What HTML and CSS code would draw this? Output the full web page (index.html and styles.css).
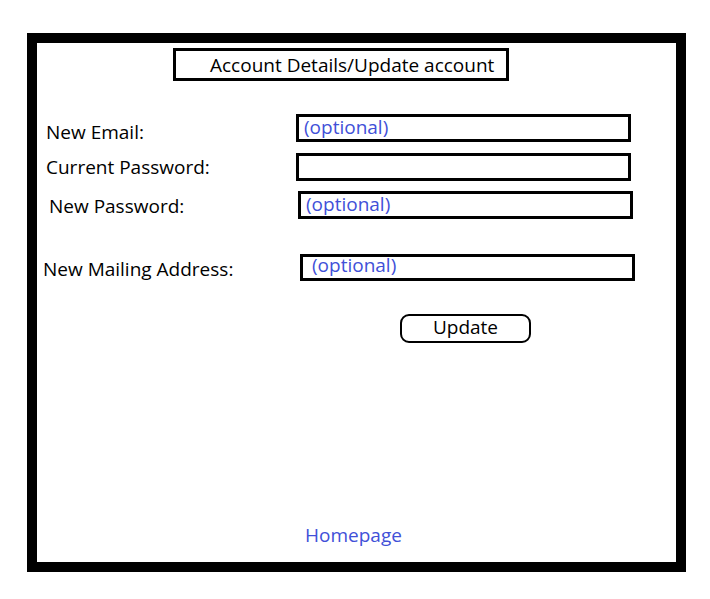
FILE: index.html
```html
<!DOCTYPE html>
<html lang="en">
<head>
	<meta charset="UTF-8">
	<meta name="viewport" content="width=device-width, initial-scale=1.0">
	<title>Account Details</title>
	<link rel="stylesheet" href="styles.css">
</head>
<body>

<div class="frame">

	<!-- Page title -->
	<div class="title-box">Account Details/Update account</div>

	<!-- Account form -->
	<form class="account-form">
		<div class="form-row row-email">
			<label class="field-label" for="email">New Email:</label>
			<input class="field-input" id="email" type="text" placeholder="(optional)">
		</div>
		<div class="form-row row-current">
			<label class="field-label" for="current">Current Password:</label>
			<input class="field-input" id="current" type="password">
		</div>
		<div class="form-row row-newpass">
			<label class="field-label" for="newpass">New Password:</label>
			<input class="field-input" id="newpass" type="password" placeholder="(optional)">
		</div>
		<div class="form-row row-address">
			<label class="field-label" for="address">New Mailing Address:</label>
			<input class="field-input" id="address" type="text" placeholder="(optional)">
		</div>
		<div class="button-row">
			<button class="update-btn" type="button">Update</button>
		</div>
	</form>

	<div class="footer-link">
		<a href="#">Homepage</a>
	</div>

</div>

</body>
</html>
```

FILE: styles.css
```css
	body {
		background-color: white;
		color: black;
		font-family: "Open Sans", "Noto Sans", sans-serif;
		font-size: 19px;
		margin: 0;
		padding: 0;
		}

	.frame {
		display: flex;
		flex-direction: column;
		box-sizing: border-box;
		width: 659px;
		height: 539px;
		margin: 33px 0 0 27px;
		padding: 5px 0 15px 0;
		border: 10px solid black;
		}

	.title-box {
		box-sizing: border-box;
		width: 336px;
		height: 33px;
		margin-left: 136px;
		padding-left: 34px;
		border: 3px solid black;
		line-height: 29px;
		}

	.account-form {
		display: flex;
		flex-direction: column;
		margin-top: 33px;
		}

	.form-row {
		display: flex;
		align-items: flex-start;
		height: 28px;
		}

	.field-label {
		line-height: 28px;
		}

	.field-input {
		box-sizing: border-box;
		width: 335px;
		height: 28px;
		padding: 0 5px 3px 5px;
		border: 3px solid black;
		border-radius: 0;
		outline: none;
		font-family: inherit;
		font-size: 19px;
		color: #4150d8;
		background: white;
		}

	.field-input::placeholder {
		color: #4150d8;
		opacity: 1;
		}

	/* Rows are a bit off from each other, like the sketch */
	.row-email {
		padding-left: 9px;
		}

	.row-email .field-label {
		width: 250px;
		margin-top: 4px;
		}

	.row-current {
		margin-top: 11px;
		padding-left: 9px;
		}

	.row-current .field-label {
		width: 250px;
		}

	.row-newpass {
		margin-top: 10px;
		padding-left: 12px;
		}

	.row-newpass .field-label {
		width: 249px;
		margin-top: 1px;
		}

	.row-address {
		margin-top: 35px;
		padding-left: 6px;
		}

	.row-address .field-label {
		width: 257px;
		margin-top: 1px;
		}

	.row-address .field-input {
		height: 27px;
		padding: 0 5px 6px 9px;
		}

	.button-row {
		margin-top: 32px;
		padding-left: 363px;
		}

	.update-btn {
		box-sizing: border-box;
		width: 131px;
		height: 29px;
		padding: 0 0 3px 0;
		border: 2px solid black;
		border-radius: 9px;
		background: white;
		color: black;
		font-family: inherit;
		font-size: 19px;
		line-height: 22px;
		cursor: pointer;
		}

	.footer-link {
		margin-top: auto;
		padding-left: 268px;
		line-height: 24px;
		}

	.footer-link a {
		color: #4150d8;
		text-decoration: none;
		}
```
